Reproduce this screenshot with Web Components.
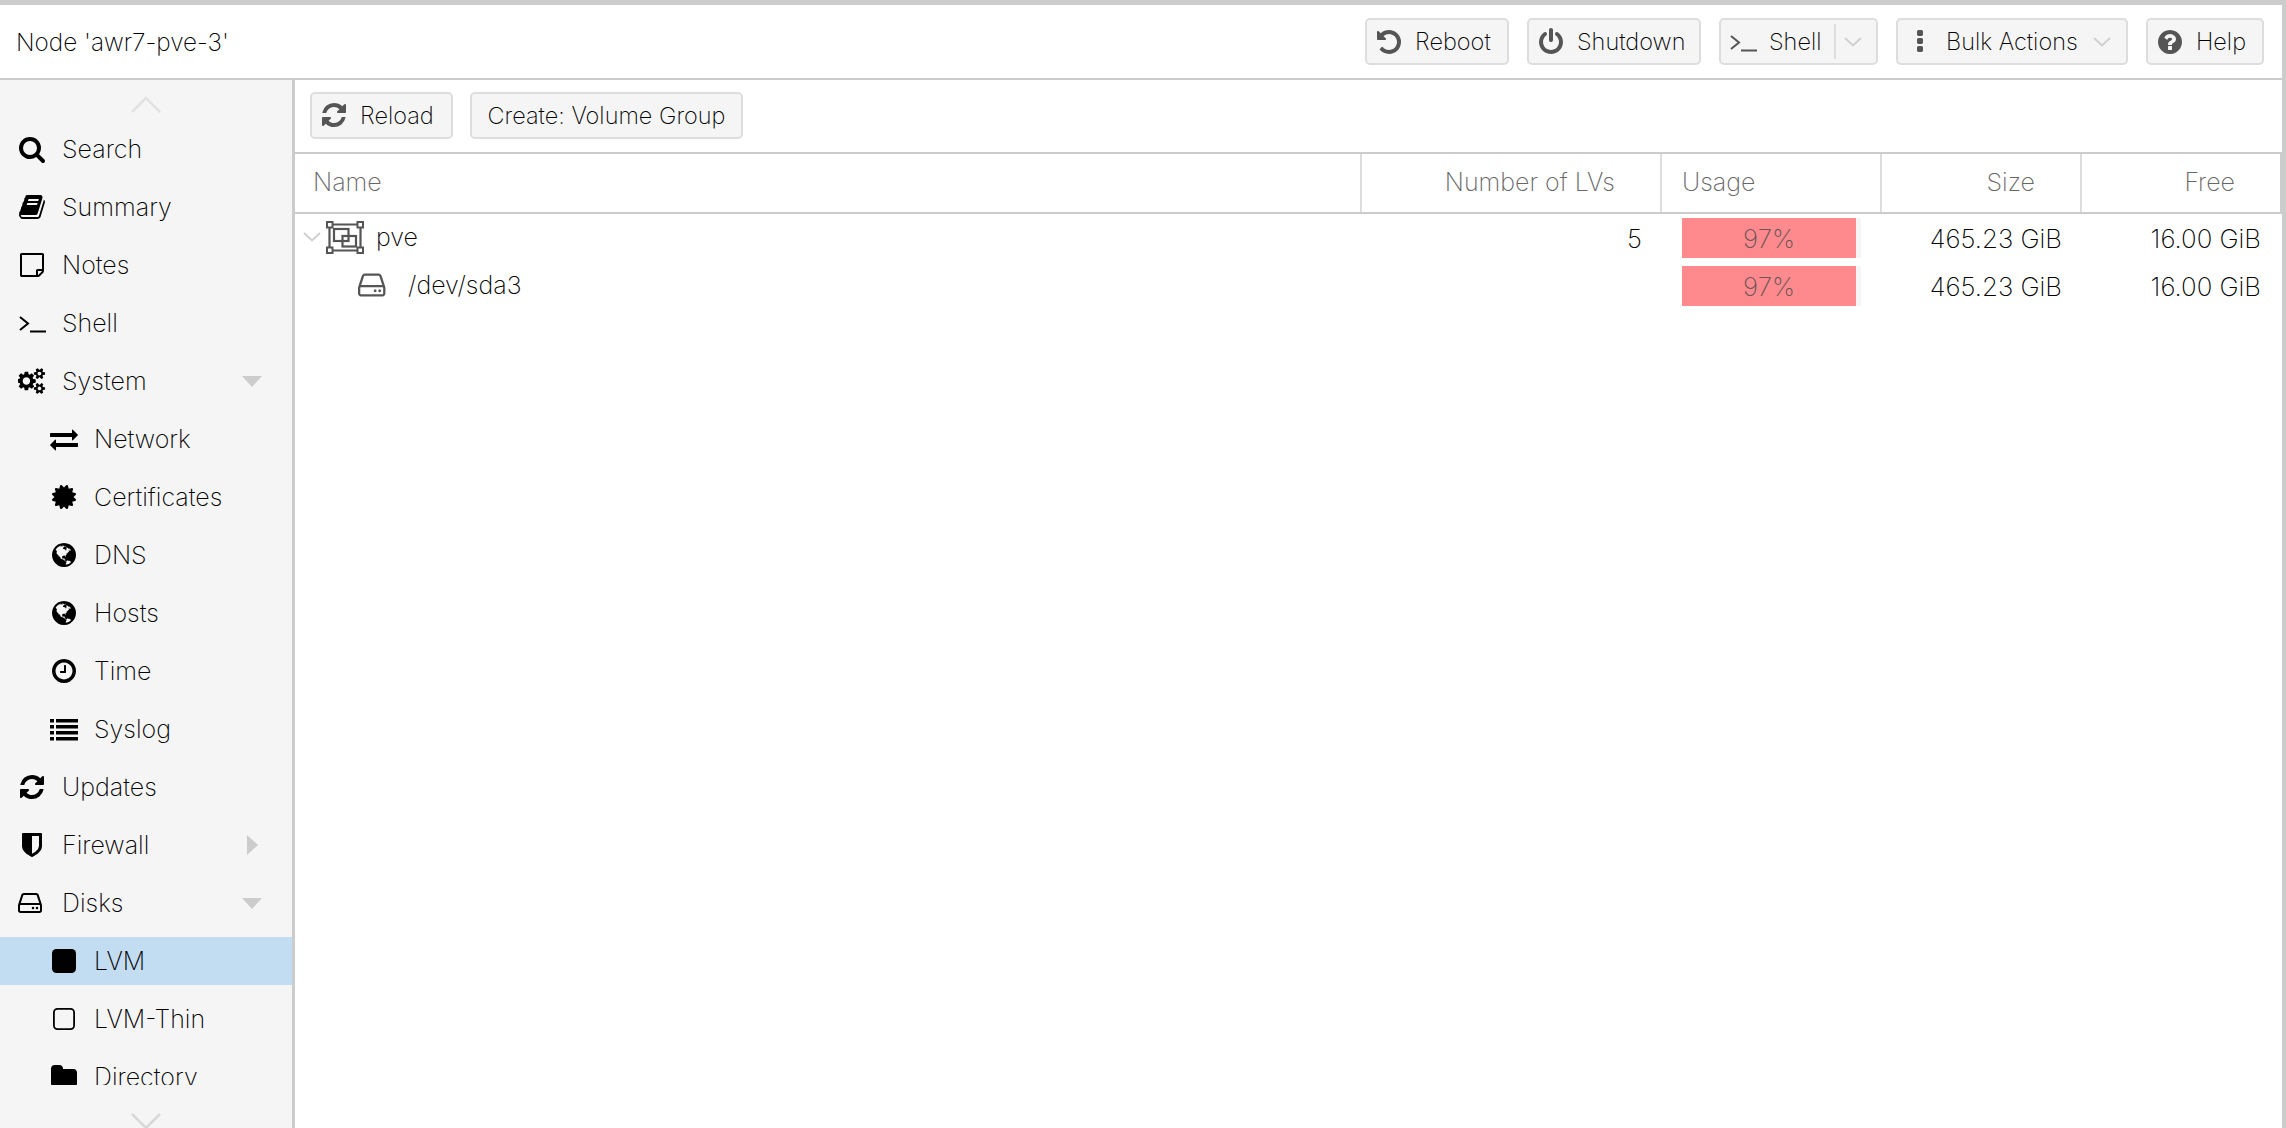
<!DOCTYPE html>
<html>
<head>
<meta charset="utf-8">
<title>Node 'awr7-pve-3'</title>
<style>
  html, body { margin: 0; height: 100%; overflow: hidden; background: #fff; }
  body { font: 250 25px Inter, "Liberation Sans", sans-serif; color: #000; }
</style>
</head>
<body>
<pve-node-panel>
  <pve-header slot="header" title="Node 'awr7-pve-3'">
    <pve-button icon="undo" width="144" style="margin-right:18px">Reboot</pve-button>
    <pve-button icon="power" width="174" style="margin-right:18px">Shutdown</pve-button>
    <pve-button icon="terminal" width="159" split style="margin-right:18px">Shell</pve-button>
    <pve-button icon="dots" width="232" menu style="margin-right:18px">Bulk Actions</pve-button>
    <pve-button icon="help" width="118">Help</pve-button>
  </pve-header>
  <pve-sidebar slot="nav">
    <pve-nav-item icon="search">Search</pve-nav-item>
    <pve-nav-item icon="book">Summary</pve-nav-item>
    <pve-nav-item icon="note">Notes</pve-nav-item>
    <pve-nav-item icon="terminal">Shell</pve-nav-item>
    <pve-nav-item icon="gears" expander="down">System</pve-nav-item>
    <pve-nav-item icon="exchange" nested>Network</pve-nav-item>
    <pve-nav-item icon="cert" nested>Certificates</pve-nav-item>
    <pve-nav-item icon="globe" nested>DNS</pve-nav-item>
    <pve-nav-item icon="globe" nested>Hosts</pve-nav-item>
    <pve-nav-item icon="clock" nested>Time</pve-nav-item>
    <pve-nav-item icon="list" nested>Syslog</pve-nav-item>
    <pve-nav-item icon="refresh">Updates</pve-nav-item>
    <pve-nav-item icon="shield" expander="right">Firewall</pve-nav-item>
    <pve-nav-item icon="hdd" expander="down">Disks</pve-nav-item>
    <pve-nav-item icon="square" nested selected>LVM</pve-nav-item>
    <pve-nav-item icon="square-o" nested>LVM-Thin</pve-nav-item>
    <pve-nav-item icon="folder" nested>Directory</pve-nav-item>
  </pve-sidebar>
  <pve-toolbar slot="toolbar">
    <pve-button icon="refresh" width="143" style="margin-right:17px">Reload</pve-button>
    <pve-button width="273">Create: Volume Group</pve-button>
  </pve-toolbar>
  <pve-lvm-grid slot="grid"></pve-lvm-grid>
</pve-node-panel>

<script>
  // font awesome 4 outlines, all in a 1792 box unless the entry says otherwise
  const ICONS = {
    search: 'M1216 832q0-185-131.5-316.5t-316.5-131.5-316.5 131.5-131.5 316.5 131.5 316.5 316.5 131.5 316.5-131.5 131.5-316.5zm512 832q0 52-38 90t-90 38q-54 0-90-38l-343-342q-179 124-399 124-143 0-273.5-55.5t-225-150-150-225-55.5-273.5 55.5-273.5 150-225 225-150 273.5-55.5 273.5 55.5 225 150 150 225 55.5 273.5q0 220-124 399l343 343q37 37 37 90z',
    book: 'M1703 478q40 57 18 129l-275 906q-19 64-76.5 107.5t-122.5 43.5h-923q-77 0-148.5-53.5t-99.5-131.5q-24-67-2-127 0-4 3-27t4-37q1-8-3-21.5t-3-19.5q2-11 8-21t16.5-23.5 16.5-23.5q23-38 45-91.5t30-91.5q3-10 .5-30t-.5-28q3-11 17-28t17-23q21-36 42-92t25-90q1-9-2.5-32t.5-28q4-13 22-30.5t22-22.5q19-26 42.5-84.5t27.5-96.5q1-8-3-25.5t-2-26.5q2-8 9-18t18-23 17-21q8-12 16.5-30.5t15-35 16-36 19.5-32 26.5-23.5 36-11.5 47.5 5.5l-1 3q38-9 51-9h761q74 0 114 56t18 130l-274 906q-36 119-71.5 153.5t-128.5 34.5h-869q-27 0-38 15-11 16-1 43 24 70 144 70h923q29 0 56-15.5t35-41.5l300-987q7-22 5-57 38 15 59 43zm-1064 2q-4 13 2 22.5t20 9.5h608q13 0 25.5-9.5t16.5-22.5l21-64q4-13-2-22.5t-20-9.5h-608q-13 0-25.5 9.5t-16.5 22.5zm-83 256q-4 13 2 22.5t20 9.5h608q13 0 25.5-9.5t16.5-22.5l21-64q4-13-2-22.5t-20-9.5h-608q-13 0-25.5 9.5t-16.5 22.5z',
    note: { box: '-128 0 1792 1792', d: 'M1400 1280h-248v248q29-10 41-22l185-185q12-12 22-41zm-280-128h288v-896h-1280v1280h896v-288q0-40 28-68t68-28zm416-928v1024q0 40-20 88t-48 76l-184 184q-28 28-76 48t-88 20h-1024q-40 0-68-28t-28-68v-1344q0-40 28-68t68-28h1344q40 0 68 28t28 68z' },
    gears: { box: '0 0 1920 1792', d: 'M832 896q0-106-75-181t-181-75-181 75-75 181 75 181 181 75 181-75 75-181zm768 512q0-52-38-90t-90-38-90 38-38 90q0 53 37.5 90.5t90.5 37.5 90.5-37.5 37.5-90.5zm0-1024q0-52-38-90t-90-38-90 38-38 90q0 53 37.5 90.5t90.5 37.5 90.5-37.5 37.5-90.5zm-384 421v185q0 10-7 19.5t-16 10.5l-155 24q-11 35-32 76 34 48 90 115 7 11 7 20 0 12-7 19-23 30-82.5 89.5t-78.5 59.5q-11 0-21-7l-115-90q-37 19-77 31-11 108-23 155-7 24-30 24h-186q-11 0-20-7.5t-10-17.5l-23-153q-34-10-75-31l-118 89q-7 7-20 7-11 0-21-8-144-133-144-160 0-9 7-19 10-14 41-53t47-61q-23-44-35-82l-152-24q-10-1-17-9.5t-7-19.5v-185q0-10 7-19.5t16-10.5l155-24q11-35 32-76-34-48-90-115-7-11-7-20 0-12 7-20 22-30 82-89t79-59q11 0 21 7l115 90q34-18 77-32 11-108 23-154 7-24 30-24h186q11 0 20 7.5t10 17.5l23 153q34 10 75 31l118-89q8-7 20-7 11 0 21 8 144 133 144 160 0 8-7 19-12 16-42 54t-45 60q23 48 34 82l152 23q10 2 17 10.5t7 19.5zm640 533v140q0 16-149 31-12 27-30 52 51 113 51 138 0 4-4 7-122 71-124 71-8 0-46-47t-52-68q-20 2-30 2t-30-2q-14 21-52 68t-46 47q-2 0-124-71-4-3-4-7 0-25 51-138-18-25-30-52-149-15-149-31v-140q0-16 149-31 13-29 30-52-51-113-51-138 0-4 4-7 4-2 35-20t59-34 30-16q8 0 46 46.5t52 67.5q20-2 30-2t30 2q51-71 92-112l6-2q4 0 124 70 4 3 4 7 0 25-51 138 17 23 30 52 149 15 149 31zm0-1024v140q0 16-149 31-12 27-30 52 51 113 51 138 0 4-4 7-122 71-124 71-8 0-46-47t-52-68q-20 2-30 2t-30-2q-14 21-52 68t-46 47q-2 0-124-71-4-3-4-7 0-25 51-138-18-25-30-52-149-15-149-31v-140q0-16 149-31 13-29 30-52-51-113-51-138 0-4 4-7 4-2 35-20t59-34 30-16q8 0 46 46.5t52 67.5q20-2 30-2t30 2q51-71 92-112l6-2q4 0 124 70 4 3 4 7 0 25-51 138 17 23 30 52 149 15 149 31z' },
    exchange: 'M1792 1184v192q0 13-9.5 22.5t-22.5 9.5h-1376v192q0 13-9.5 22.5t-22.5 9.5q-12 0-24-10l-319-320q-9-9-9-22 0-14 9-23l320-320q9-9 23-9 13 0 22.5 9.5t9.5 22.5v192h1376q13 0 22.5 9.5t9.5 22.5zm0-544q0 14-9 23l-320 320q-9 9-23 9-13 0-22.5-9.5t-9.5-22.5v-192h-1376q-13 0-22.5-9.5t-9.5-22.5v-192q0-13 9.5-22.5t22.5-9.5h1376v-192q0-14 9-23t23-9q12 0 24 10l319 319q9 9 9 23z',
    cert: 'M1504 896l138 135q30 28 20 70-12 41-52 51l-188 48 53 186q12 41-19 70-29 31-70 19l-186-53-48 188q-10 40-51 52-12 2-19 2-31 0-51-22l-135-138-135 138q-28 30-70 20-41-11-51-52l-48-188-186 53q-41 12-70-19-31-29-19-70l53-186-188-48q-40-10-52-51-10-42 20-70l138-135-138-135q-30-28-20-70 12-41 52-51l188-48-53-186q-12-41 19-70 29-31 70-19l186 53 48-188q10-41 51-51 41-12 70 19l135 139 135-139q29-30 70-19 41 10 51 51l48 188 186-53q41-12 70 19 31 29 19 70l-53 186 188 48q40 10 52 51 10 42-20 70z',
    globe: 'M896 128q209 0 385.5 103t279.5 279.5 103 385.5-103 385.5-279.5 279.5-385.5 103-385.5-103-279.5-279.5-103-385.5 103-385.5 279.5-279.5 385.5-103zm274 521q-2 1-9.5 9.5t-13.5 9.5q2 0 4.5-5t5-11 3.5-7q6-7 22-15 14-6 52-12 34-8 51 11-2-2 9.5-13t14.5-12q3-2 15-4.5t15-7.5l2-22q-12 1-17.5-7t-6.5-21q0 2-6 8 0-7-4.5-8t-11.5 1-9 1q-10-3-15-7.5t-8-16.5-4-15q-2-5-9.5-10.5t-9.5-10.5q-1-2-2.5-5.5t-3-6.5-4-5.5-5.5-2.5-7 5-7.5 10-4.5 5q-3-2-6-1.5t-4.5 1-4.5 3-5 3.5q-3 2-8.5 3t-8.5 2q15-5-1-11-10-4-16-3 9-4 7.5-12t-8.5-14h5q-1-4-8.5-8.5t-17.5-8.5-13-6q-8-5-34-9.5t-33-.5q-5 6-4.5 10.5t4 14 3.5 12.5q1 6-5.5 13t-6.5 12q0 7 14 15.5t10 21.5q-3 8-16 16t-16 12q-5 8-1.5 18.5t10.5 16.5q2 2 1.5 4t-3.5 4.5-5.5 4-6.5 3.5l-3 2q-11 5-20.5-6t-13.5-26q-7-25-16-30-23-8-29 1-5-13-41-26-25-9-58-4 6-1 0-15-7-15-19-12 3-6 4-17.5t1-13.5q3-13 12-23 1-1 7-8.5t9.5-13.5.5-6q35 4 50-11 5-5 11.5-17t10.5-17q9-6 14-5.5t14.5 5.5 14.5 5q14 1 15.5-11t-7.5-20q12 1 3-17-4-7-8-9-12-4-27 5-8 4 2 8-1-1-9.5 10.5t-16.5 17.5-16-5q-1-1-5.5-13.5t-9.5-13.5q-8 0-16 15 3-8-11-15t-24-8q19-12-8-27-7-4-20.5-5t-19.5 4q-5 7-5.5 11.5t5 8 10.5 5.5 11.5 4 8.5 3q14 10 8 14-2 1-8.5 3.5t-11.5 4.5-6 4q-3 4 0 14t-2 14q-5-5-9-17.5t-7-16.5q7 9-25 6l-10-1q-4 0-16 2t-20.5 1-13.5-8q-4-8 0-20 1-4 4-2-4-3-11-9.5t-10-8.5q-46 15-94 41 6 1 12-1 5-2 13-6.5t10-5.5q34-14 42-7l5-5q14 16 20 25-7-4-30-1-20 6-22 12 7 12 5 18-4-3-11.5-10t-14.5-11-15-5q-16 0-22 1-146 80-235 222 7 7 12 8 4 1 5 9t2.5 11 11.5-3q9 8 3 19 1-1 44 27 19 17 21 21 3 11-10 18-1-2-9-9t-9-4q-3 5 .5 18.5t10.5 12.5q-7 0-9.5 16t-2.5 35.5-1 23.5l2 1q-3 12 5.5 34.5t21.5 19.5q-13 3 20 43 6 8 8 9 3 2 12 7.5t15 10 10 10.5q4 5 10 22.5t14 23.5q-2 6 9.5 20t10.5 23q-1 0-2.5 1t-2.5 1q3 7 15.5 14t15.5 13q1 3 2 10t3 11 8 2q2-20-24-62-15-25-17-29-3-5-5.5-15.5t-4.5-14.5q2 0 6 1.5t8.5 3.5 7.5 4 2 3q-3 7 2 17.5t12 18.5 17 19 12 13q6 6 14 19.5t0 13.5q9 0 20 10.5t17 19.5q5 8 8 26t5 24q2 7 8.5 13.5t12.5 9.5l16 8 13 7q5 2 18.5 10.5t21.5 11.5q10 4 16 4t14.5-2.5 13.5-3.5q15-2 29 15t21 21q36 19 55 11-2 1 .5 7.5t8 15.5 9 14.5 5.5 8.5q5 6 18 15t18 15q6-4 7-9-3 8 7 20t18 10q14-3 14-32-31 15-49-18 0-1-2.5-5.5t-4-8.5-2.5-8.5 0-7.5 5-3q9 0 10-3.5t-2-12.5-4-13q-1-8-11-20t-12-15q-5 9-16 8t-16-9q0 1-1.5 5.5t-1.5 6.5q-13 0-15-1 1-3 2.5-17.5t3.5-22.5q1-4 5.5-12t7.5-14.5 4-12.5-4.5-9.5-17.5-2.5q-19 1-26 20-1 3-3 10.5t-5 11.5-9 7q-7 3-24 2t-24-5q-13-8-22.5-29t-9.5-37q0-10 2.5-26.5t3-25-5.5-24.5q3-2 9-9.5t10-10.5q2-1 4.5-1.5t4.5 0 4-1.5 3-6q-1-1-4-3-3-3-4-3 7 3 28.5-1.5t27.5 1.5q15 11 22-2 0-1-2.5-9.5t-.5-13.5q5 27 29 9 3 3 15.5 5t17.5 5q3 2 7 5.5t5.5 4.5 5-.5 8.5-6.5q10 14 12 24 11 40 19 44 7 3 11 2t4.5-9.5 0-14-1.5-12.5l-1-8v-18l-1-8q-15-3-18.5-12t1.5-18.5 15-18.5q1-1 8-3.5t15.5-6.5 12.5-8q21-19 15-35 7 0 11-9-1 0-5-3t-7.5-5-4.5-2q9-5 2-16 5-3 7.5-11t7.5-10q9 12 21 2 8-8 1-16 5-7 20.5-10.5t18.5-9.5q7 2 8-2t1-12 3-12q4-5 15-9t13-5l17-11q3-4 0-4 18 2 31-11 10-11-6-20 3-6-3-9.5t-15-5.5q3-1 11.5-.5t10.5-1.5q15-10-7-16-17-5-43 12zm-163 877q206-36 351-189-3-3-12.5-4.5t-12.5-3.5q-18-7-24-8 1-7-2.5-13t-8-9-12.5-8-11-7q-2-2-7-6t-7-5.5-7.5-4.5-8.5-2-10 1l-3 1q-3 1-5.5 2.5t-5.5 3-4 3 0 2.5q-21-17-36-22-5-1-11-5.5t-10.5-7-10-1.5-11.5 7q-5 5-6 15t-2 13q-7-5 0-17.5t2-18.5q-3-6-10.5-4.5t-12 4.5-11.5 8.5-9 6.5-8.5 5.5-8.5 7.5q-3 4-6 12t-5 11q-2-4-11.5-6.5t-9.5-5.5q2 10 4 35t5 38q7 31-12 48-27 25-29 40-4 22 12 26 0 7-8 20.5t-7 21.5q0 6 2 16z',
    clock: 'M1024 544v448q0 14-9 23t-23 9h-320q-14 0-23-9t-9-23v-64q0-14 9-23t23-9h224v-352q0-14 9-23t23-9h64q14 0 23 9t9 23zm416 352q0-148-73-273t-198-198-273-73-273 73-198 198-73 273 73 273 198 198 273 73 273-73 198-198 73-273zm224 0q0 209-103 385.5t-279.5 279.5-385.5 103-385.5-103-279.5-279.5-103-385.5 103-385.5 279.5-279.5 385.5-103 385.5 103 279.5 279.5 103 385.5z',
    list: 'M0 256h256v224h-256zM384 256h1408v224h-1408zM0 640h256v224h-256zM384 640h1408v224h-1408zM0 1024h256v224h-256zM384 1024h1408v224h-1408zM0 1408h256v224h-256zM384 1408h1408v224h-1408z',
    refresh: 'M1639 1056q0 5-1 7-64 268-268 434.5t-478 166.5q-146 0-282.5-55t-243.5-157l-129 129q-19 19-45 19t-45-19-19-45v-448q0-26 19-45t45-19h448q26 0 45 19t19 45-19 45l-137 137q71 66 161 102t187 36q134 0 250-65t186-179q11-17 53-117 8-23 30-23h192q13 0 22.5 9.5t9.5 22.5zm25-800v448q0 26-19 45t-45 19h-448q-26 0-45-19t-19-45 19-45l138-138q-148-137-349-137-134 0-250 65t-186 179q-11 17-53 117-8 23-30 23h-199q-13 0-22.5-9.5t-9.5-22.5v-7q65-268 270-434.5t480-166.5q146 0 284 55.5t245 156.5l130-129q19-19 45-19t45 19 19 45z',
    shield: 'M1344 960v-640h-448v1137q119-63 213-137 235-184 235-360zm192-768v768q0 86-33.5 170.5t-83 150-118 127.5-126.5 103-121 77.5-89.5 49.5-42.5 20q-12 6-26 6t-26-6q-16-7-42.5-20t-89.5-49.5-121-77.5-126.5-103-118-127.5-83-150-33.5-170.5v-768q0-26 19-45t45-19h1152q26 0 45 19t19 45z',
    hdd: 'M1040 1216q0 33-23.5 56.5t-56.5 23.5-56.5-23.5-23.5-56.5 23.5-56.5 56.5-23.5 56.5 23.5 23.5 56.5zm256 0q0 33-23.5 56.5t-56.5 23.5-56.5-23.5-23.5-56.5 23.5-56.5 56.5-23.5 56.5 23.5 23.5 56.5zm112 160v-320q0-13-9.5-22.5t-22.5-9.5h-1216q-13 0-22.5 9.5t-9.5 22.5v320q0 13 9.5 22.5t22.5 9.5h1216q13 0 22.5-9.5t9.5-22.5zm-1230-480h1180l-157-482q-4-13-16-21.5t-26-8.5h-782q-14 0-26 8.5t-16 21.5zm1358 160v320q0 66-47 113t-113 47h-1216q-66 0-113-47t-47-113v-320q0-25 16-75l197-606q17-53 63-86t101-33h782q55 0 101 33t63 86l197 606q16 50 16 75z',
    square: { box: '-128 0 1792 1792', d: 'M1536 416v960q0 119-84.5 203.5t-203.5 84.5h-960q-119 0-203.5-84.5t-84.5-203.5v-960q0-119 84.5-203.5t203.5-84.5h960q119 0 203.5 84.5t84.5 203.5z' },
    'square-o': 'M480 192H1312A288 288 0 0 1 1600 480V1312A288 288 0 0 1 1312 1600H480A288 288 0 0 1 192 1312V480A288 288 0 0 1 480 192ZM480 307A173 173 0 0 0 307 480V1312A173 173 0 0 0 480 1485H1312A173 173 0 0 0 1485 1312V480A173 173 0 0 0 1312 307Z',
    folder: 'M1728 608v704q0 92-66 158t-158 66h-1216q-92 0-158-66t-66-158v-960q0-92 66-158t158-66h320q92 0 158 66t66 158v32h672q92 0 158 66t66 158z',
    undo: 'M1664 896q0 156-61 298t-164 245-245 164-298 61q-172 0-327-72.5t-264-204.5q-7-10-6.5-22.5t8.5-20.5l137-138q10-9 25-9 16 2 23 12 73 95 179 147t225 52q104 0 198.5-40.5t163.5-109.5 109.5-163.5 40.5-198.5-40.5-198.5-109.5-163.5-163.5-109.5-198.5-40.5q-98 0-188 35.5t-160 101.5l137 138q31 30 14 69-17 40-59 40h-448q-26 0-45-19t-19-45v-448q0-42 40-59 39-17 69 14l130 129q107-101 244.5-156.5t284.5-55.5q156 0 298 61t245 164 164 245 61 298z',
    power: 'M1664 896q0 156-61 298t-164 245-245 164-298 61-298-61-245-164-164-245-61-298q0-182 80.5-343t226.5-270q43-32 95.5-25t83.5 50q32 42 24.5 94.5t-49.5 84.5q-98 74-151.5 181t-53.5 228q0 104 40.5 198.5t109.5 163.5 163.5 109.5 198.5 40.5 198.5-40.5 163.5-109.5 109.5-163.5 40.5-198.5q0-121-53.5-228t-151.5-181q-42-32-49.5-84.5t24.5-94.5q31-43 84-50t95 25q146 109 226.5 270t80.5 343zm-640-768v640q0 52-38 90t-90 38-90-38-38-90v-640q0-52 38-90t90-38 90 38 38 90z',
    help: 'M1024 1376v-192q0-14-9-23t-23-9h-192q-14 0-23 9t-9 23v192q0 14 9 23t23 9h192q14 0 23-9t9-23zm256-672q0-88-55.5-163t-138.5-116-170-41q-243 0-371 213-15 24 8 42l132 100q7 6 19 6 16 0 25-12 53-68 86-92 34-24 86-24 48 0 85.5 26t37.5 59q0 38-20 61t-68 45q-63 28-115.5 86.5t-52.5 125.5v36q0 14 9 23t23 9h192q14 0 23-9t9-23q0-19 21.5-49.5t54.5-49.5q32-18 49-28.5t46-35 44.5-48 28-60.5 12.5-81zm384 192q0 209-103 385.5t-279.5 279.5-385.5 103-385.5-103-279.5-279.5-103-385.5 103-385.5 279.5-279.5 385.5-103 385.5 103 279.5 279.5 103 385.5z',
    dots: 'M1088 1248v192q0 40-28 68t-68 28h-192q-40 0-68-28t-28-68v-192q0-40 28-68t68-28h192q40 0 68 28t28 68zm0-512v192q0 40-28 68t-68 28h-192q-40 0-68-28t-28-68v-192q0-40 28-68t68-28h192q40 0 68 28t28 68zm0-512v192q0 40-28 68t-68 28h-192q-40 0-68-28t-28-68v-192q0-40 28-68t68-28h192q40 0 68 28t28 68z'
  };

  function iconSvg(name, size) {
    // the terminal glyph is thin in the original so it is drawn with strokes
    if (name === 'terminal') {
      return `<svg width="${size}" height="${size}" viewBox="0 0 28 28" fill="none" stroke="currentColor" stroke-width="2"><path d="M2 8l8 6.5-8 6.5"/><path d="M12 22.5h16"/></svg>`;
    }
    const ic = ICONS[name];
    if (!ic) return '';
    const box = ic.box || '0 0 1792 1792';
    const d = ic.d || ic;
    return `<svg width="${size}" height="${size}" viewBox="${box}" fill="currentColor"><path d="${d}"/></svg>`;
  }

  const CHEVRON = `<svg width="18" height="10" viewBox="0 0 18 10" fill="none" stroke="#d0d0d0" stroke-width="2"><path d="M1 1l8 7.5L17 1"/></svg>`;

  class PveNodePanel extends HTMLElement {
    constructor() {
      super();
      this.attachShadow({ mode: 'open' }).innerHTML = `
        <style>
          :host { display: flex; flex-direction: column; height: 1128px; box-sizing: border-box;
                  border-top: 5px solid #ccc; border-right: 4px solid #ccc; }
          .body { flex: 1; min-height: 0; display: flex; }
          .main { flex: 1; min-width: 0; display: flex; flex-direction: column; }
        </style>
        <slot name="header"></slot>
        <div class="body">
          <slot name="nav"></slot>
          <div class="main">
            <slot name="toolbar"></slot>
            <slot name="grid"></slot>
          </div>
        </div>`;
    }
  }

  class PveHeader extends HTMLElement {
    constructor() {
      super();
      this.attachShadow({ mode: 'open' }).innerHTML = `
        <style>
          :host { display: flex; align-items: center; height: 75px; box-sizing: border-box;
                  border-bottom: 2px solid #ccc; padding: 0 18px 0 16px; }
          .title { flex: 1; font-size: 24.3px; }
          .tools { display: flex; align-items: center; }
        </style>
        <div class="title"></div>
        <div class="tools"><slot></slot></div>`;
    }
    connectedCallback() {
      this.shadowRoot.querySelector('.title').textContent = this.getAttribute('title');
    }
  }

  class PveButton extends HTMLElement {
    constructor() {
      super();
      this.attachShadow({ mode: 'open' });
    }
    connectedCallback() {
      const icon = this.getAttribute('icon');
      const split = this.hasAttribute('split');
      const menu = this.hasAttribute('menu');
      this.shadowRoot.innerHTML = `
        <style>
          :host { display: block; }
          .btn { display: flex; align-items: center; height: 47px; box-sizing: border-box;
                 border: 2px solid #ddd; border-radius: 5px; background: #f5f5f5;
                 padding: 0 15px 0 8px; font-size: 23.5px; white-space: nowrap; }
          .btn.plain { justify-content: center; padding: 0; }
          .ic { display: flex; flex: none; width: 28px; justify-content: center; color: #555; margin-right: 12px; }
          .txt { flex: 1; }
          .plain .txt { flex: none; }
          .sep { align-self: stretch; flex: none; width: 2px; background: #ddd; margin: 4px 8px 4px 12px; }
          .arrow { display: flex; flex: none; }
        </style>
        <div class="btn ${icon ? '' : 'plain'}" style="width:${this.getAttribute('width')}px">
          ${icon ? `<span class="ic">${iconSvg(icon, 28)}</span>` : ''}
          <span class="txt"><slot></slot></span>
          ${split ? '<span class="sep"></span>' : ''}
          ${split || menu ? `<span class="arrow">${CHEVRON}</span>` : ''}
        </div>`;
    }
  }

  class PveSidebar extends HTMLElement {
    constructor() {
      super();
      this.attachShadow({ mode: 'open' }).innerHTML = `
        <style>
          :host { display: flex; flex-direction: column; width: 295px; flex: none; box-sizing: border-box;
                  background: #f5f5f5; border-right: 3px solid #ccc; overflow: hidden; }
          .scroll { height: 40px; flex: none; display: flex; justify-content: center; padding-top: 16px; box-sizing: border-box; }
          .scroll.down { padding-top: 27px; height: 43px; overflow: hidden; }
          .list { flex: 1; min-height: 0; overflow: hidden; display: flex; flex-direction: column; gap: 10px; padding-top: 5px; }
        </style>
        <div class="scroll"><svg width="32" height="18" viewBox="0 0 32 18" fill="none" stroke="#e2e2e2" stroke-width="2.5"><path d="M2 16L16 2l14 14"/></svg></div>
        <div class="list"><slot></slot></div>
        <div class="scroll down"><svg width="32" height="18" viewBox="0 0 32 18" fill="none" stroke="#d8d8d8" stroke-width="2.5"><path d="M2 2l14 14L30 2"/></svg></div>`;
    }
  }

  class PveNavItem extends HTMLElement {
    constructor() {
      super();
      this.attachShadow({ mode: 'open' });
    }
    connectedCallback() {
      const exp = this.getAttribute('expander');
      const arrow = exp === 'down'
        ? '<svg width="20" height="11" viewBox="0 0 20 11"><path d="M0 0h20l-10 11z" fill="#ccc"/></svg>'
        : exp === 'right'
          ? '<svg width="11" height="20" viewBox="0 0 11 20"><path d="M0 0v20l11-10z" fill="#ccc"/></svg>'
          : '';
      this.shadowRoot.innerHTML = `
        <style>
          :host { display: flex; flex: none; align-items: center; height: 48px; font-size: 25px;
                  padding: 0 0 0 16px; box-sizing: border-box; position: relative; }
          :host([nested]) { padding-left: 48px; }
          :host([selected]) { background: #c2ddf2; }
          .ic { display: flex; flex: none; width: 32px; justify-content: center; margin-right: 14px; color: #000; }
          .txt { flex: 1; min-width: 0; white-space: nowrap; }
          .exp { width: 80px; flex: none; display: flex; justify-content: center; }
          :host(:not([expander])) .exp { display: none; }
        </style>
        <span class="ic">${iconSvg(this.getAttribute('icon'), 28)}</span>
        <span class="txt"><slot></slot></span>
        <span class="exp">${arrow}</span>`;
    }
  }

  class PveToolbar extends HTMLElement {
    constructor() {
      super();
      this.attachShadow({ mode: 'open' }).innerHTML = `
        <style>
          :host { display: flex; align-items: center; height: 74px; box-sizing: border-box;
                  border-bottom: 2px solid #ccc; padding: 0 0 2px 15px; flex: none; }
        </style>
        <slot></slot>`;
    }
  }

  class PveUsageBar extends HTMLElement {
    constructor() {
      super();
      this.attachShadow({ mode: 'open' }).innerHTML = `
        <style>
          :host { display: block; width: 179px; height: 40px; background: #f5f5f5; }
          .fill { width: 174px; height: 100%; background: #ff8a8e; color: #6b5456; display: flex;
                  align-items: center; justify-content: center; font-size: 25.8px; }
        </style>
        <div class="fill"><slot></slot></div>`;
    }
  }

  class PveLvmGrid extends HTMLElement {
    constructor() {
      super();
      const row = (name, lvs) => `
        <div class="row">
          <div class="cell name">${name}</div>
          <div class="cell num">${lvs}</div>
          <div class="cell usage"><pve-usage-bar>97%</pve-usage-bar></div>
          <div class="cell num">465.23 GiB</div>
          <div class="cell num last">16.00 GiB</div>
        </div>`;
      const pveIcon = `<svg class="vg" width="38" height="33" viewBox="0 0 38 33" fill="none" stroke="#555" stroke-width="2.2">
          <path d="M3.5 3.5h31v26h-31z"/>
          <rect x="1" y="1" width="5.5" height="5.5" fill="#fff" stroke-width="2"/><rect x="31.5" y="1" width="5.5" height="5.5" fill="#fff" stroke-width="2"/>
          <rect x="1" y="26.5" width="5.5" height="5.5" fill="#fff" stroke-width="2"/><rect x="31.5" y="26.5" width="5.5" height="5.5" fill="#fff" stroke-width="2"/>
          <rect x="8" y="8" width="14.5" height="12"/><rect x="16.5" y="15" width="13.5" height="10.5"/>
        </svg>`;
      this.attachShadow({ mode: 'open' }).innerHTML = `
        <style>
          :host { display: block; flex: 1; min-height: 0; font-size: 25px; }
          .cols { display: grid; grid-template-columns: 1067px 300px 220px 200px 1fr; }
          .head { height: 60px; box-sizing: border-box; border-bottom: 2px solid #ccc; color: #666; }
          .head > div { display: flex; align-items: center; padding: 0 45px 2px 20px; box-sizing: border-box; border-right: 2px solid #ddd; }
          .head > div:first-child { padding-left: 18px; }
          .head > div:last-child { border-right: 2px solid #ccc; }
          .head .r { justify-content: flex-end; }
          .row { display: grid; grid-template-columns: 1067px 300px 220px 200px 1fr; height: 48px; align-items: center; }
          .cell.num { text-align: right; padding-right: 20px; font-size: 25.8px; }
          .cell.num.last { padding-right: 21px; }
          .cell.usage { padding-left: 20px; }
          .name { display: flex; align-items: center; padding-bottom: 2px; box-sizing: border-box; }
          .tree { display: flex; width: 18px; margin: 0 5px 0 8px; }
          .vg { margin-right: 12px; }
          .hdd { display: flex; color: #555; margin: 0 18px 0 63px; }
        </style>
        <div class="cols head">
          <div>Name</div><div class="r">Number of LVs</div><div>Usage</div><div class="r">Size</div><div class="r">Free</div>
        </div>
        ${row(`<span class="tree">${CHEVRON}</span>${pveIcon}<span>pve</span>`, '5')}
        ${row(`<span class="hdd">${iconSvg('hdd', 32)}</span><span>/dev/sda3</span>`, '')}`;
    }
  }

  customElements.define('pve-usage-bar', PveUsageBar);
  customElements.define('pve-button', PveButton);
  customElements.define('pve-nav-item', PveNavItem);
  customElements.define('pve-sidebar', PveSidebar);
  customElements.define('pve-header', PveHeader);
  customElements.define('pve-toolbar', PveToolbar);
  customElements.define('pve-lvm-grid', PveLvmGrid);
  customElements.define('pve-node-panel', PveNodePanel);
</script>
</body>
</html>
